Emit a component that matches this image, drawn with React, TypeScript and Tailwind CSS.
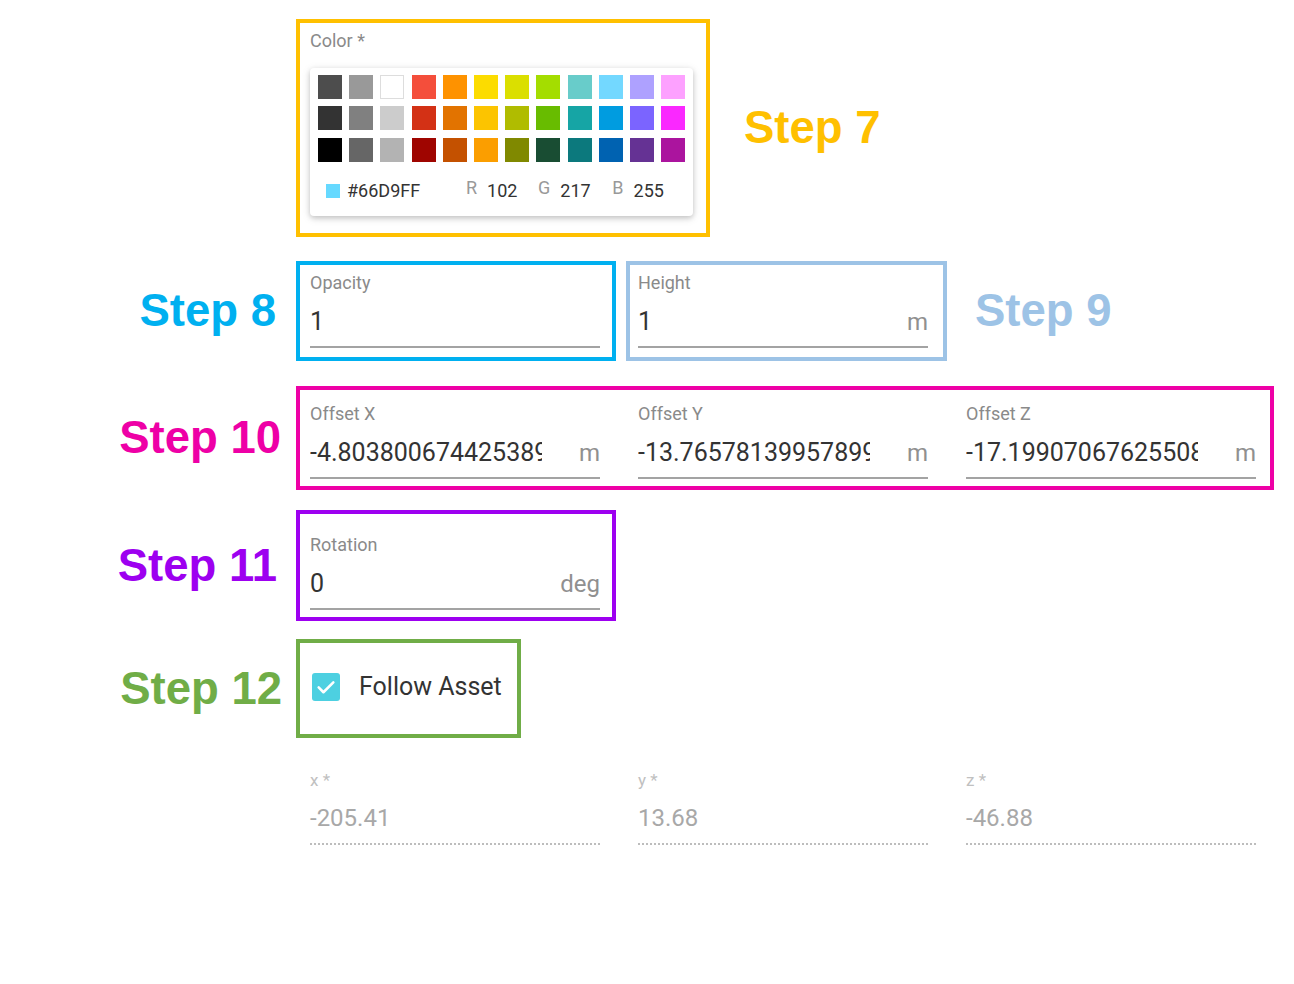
import React from "react";

const SWATCHES = [
  "#4D4D4D", "#999999", "#FFFFFF", "#F44E3B", "#FE9200", "#FCDC00", "#DBDF00", "#A4DD00", "#68CCCA", "#73D8FF", "#AEA1FF", "#FDA1FF",
  "#333333", "#808080", "#CCCCCC", "#D33115", "#E27300", "#FCC400", "#B0BC00", "#68BC00", "#16A5A5", "#009CE0", "#7B64FF", "#FA28FF",
  "#000000", "#666666", "#B3B3B3", "#9F0500", "#C45100", "#FB9E00", "#808900", "#194D33", "#0C797D", "#0062B1", "#653294", "#AB149E",
];

const font = { fontFamily: "Roboto, 'Liberation Sans', sans-serif" };

type FieldProps = {
  label: string;
  value: string;
  unit?: string;
};

const Field = ({ label, value, unit }: FieldProps) => {
  return (
    <div className="flex w-[290px] flex-col" style={font}>
      <div className="h-5 text-[18px] leading-5 text-[#8a8a8a]">{label}</div>
      <div className="mt-[15px] flex h-7 items-center justify-between">
        <div className="w-[232px] overflow-hidden whitespace-nowrap text-[25px] leading-7 text-[#333]">
          {value}
        </div>
        {unit && <div className="text-[24px] leading-7 text-[#909090]">{unit}</div>}
      </div>
      <div className="mt-[10px] h-[2px] bg-[#a3a3a3]" />
    </div>
  );
};

const StepLabel = ({ text, color }: { text: string; color: string }) => (
  <div
    className={`text-[45.5px] font-bold leading-none ${color}`}
    style={{ fontFamily: "'Liberation Sans', Arial, sans-serif" }}
  >
    {text}
  </div>
);

const Row = ({ label, pr = "pr-[15px]", children }: { label?: React.ReactNode; pr?: string; children: React.ReactNode }) => (
  <div className="flex items-center">
    <div className={`flex w-[296px] shrink-0 justify-end ${pr}`}>{label}</div>
    {children}
  </div>
);

export default function App() {
  return (
    <div className="min-h-screen w-full bg-white pt-[19px]">
      {/* step 7 */}
      <Row>
        <div className="h-[218px] w-[414px] border-4 border-[#FFC000] px-[10px] pt-[8px]" style={font}>
          <div className="h-5 text-[18px] leading-5 text-[#8a8a8a]">Color *</div>
          <div className="mt-[17px] h-[148px] w-[383px] rounded-sm bg-white px-[8px] pt-[7px] shadow-[0_2px_10px_rgba(0,0,0,0.12),0_2px_5px_rgba(0,0,0,0.16)]">
            <div className="grid grid-cols-12 gap-x-[7.3px] gap-y-[7.3px]">
              {SWATCHES.map((c, i) => (
                <div
                  key={i}
                  className={`h-6 w-6 ${c === "#FFFFFF" ? "shadow-[inset_0_0_0_1px_#ddd]" : ""}`}
                  style={{ background: c }}
                />
              ))}
            </div>
            <div className="mt-[17px] flex items-center text-[18px] leading-6 text-[#333]">
              <div className="ml-[8px] h-[14px] w-[14px] bg-[#66D9FF]" />
              <div className="ml-[7px] w-[119px]">#66D9FF</div>
              <div className="relative -top-[3px] text-[#999]">R</div>
              <div className="ml-[10px] w-[51px]">102</div>
              <div className="relative -top-[3px] text-[#999]">G</div>
              <div className="ml-[10px] w-[52px]">217</div>
              <div className="relative -top-[3px] text-[#999]">B</div>
              <div className="ml-[10px]">255</div>
            </div>
          </div>
        </div>
        <div className="ml-[34px]">
          <StepLabel text="Step 7" color="text-[#FFC000]" />
        </div>
      </Row>

      {/* steps 8 & 9 */}
      <div className="mt-[24px]">
        <Row label={<StepLabel text="Step 8" color="text-[#00B0F0]" />} pr="pr-[20px]">
          <div className="h-[100px] w-[320px] border-4 border-[#00B0F0] pl-[10px] pt-[8px]">
            <Field label="Opacity" value="1" />
          </div>
          <div className="ml-[10px] h-[100px] w-[321px] border-4 border-[#9DC3E6] pl-[8px] pt-[8px]">
            <Field label="Height" value="1" unit="m" />
          </div>
          <div className="ml-[28px]">
            <StepLabel text="Step 9" color="text-[#9DC3E6]" />
          </div>
        </Row>
      </div>

      {/* step 10 */}
      <div className="mt-[25px]">
        <Row label={<StepLabel text="Step 10" color="text-[#EE00A6]" />} pr="pr-[15px]">
          <div className="flex h-[104px] w-[978px] gap-[38px] border-4 border-[#EE00A6] pl-[10px] pt-[14px]">
            <Field label="Offset X" value="-4.803800674425389" unit="m" />
            <Field label="Offset Y" value="-13.765781399578992" unit="m" />
            <Field label="Offset Z" value="-17.199070676255083" unit="m" />
          </div>
        </Row>
      </div>

      {/* step 11 */}
      <div className="mt-[20px]">
        <Row label={<StepLabel text="Step 11" color="text-[#9D00F0]" />} pr="pr-[19px]">
          <div className="h-[111px] w-[320px] border-4 border-[#9D00F0] pl-[10px] pt-[21px]">
            <Field label="Rotation" value="0" unit="deg" />
          </div>
        </Row>
      </div>

      {/* step 12 */}
      <div className="mt-[18px]">
        <Row label={<StepLabel text="Step 12" color="text-[#70AD47]" />} pr="pr-[14px]">
          <div className="flex h-[99px] w-[225px] items-center border-4 border-[#70AD47] pb-[4px] pl-[12px]" style={font}>
            <div className="flex h-7 w-7 items-center justify-center rounded-[3px] bg-[#4DD0E1]">
              <svg width="22" height="22" viewBox="0 0 24 24" fill="none">
                <path d="M4 12.5l5.2 5.2L20 7" stroke="white" strokeWidth="2.8" strokeLinecap="round" strokeLinejoin="round" />
              </svg>
            </div>
            <div className="ml-[19px] text-[25px] leading-7 text-[#333]">Follow Asset</div>
          </div>
        </Row>
      </div>

      {/* read-only coordinates */}
      <div className="ml-[310px] mt-[32px] flex gap-[38px]" style={font}>
        {[
          ["x *", "-205.41"],
          ["y *", "13.68"],
          ["z *", "-46.88"],
        ].map(([l, v]) => (
          <div key={l} className="flex w-[290px] flex-col">
            <div className="h-5 text-[17px] leading-5 text-[#c0c0c0]">{l}</div>
            <div className="mt-[14px] h-7 text-[24px] leading-7 text-[#a8a8a8]">{v}</div>
            <div className="mt-[11px] border-b-2 border-dotted border-[#bdbdbd]" />
          </div>
        ))}
      </div>
    </div>
  );
}
